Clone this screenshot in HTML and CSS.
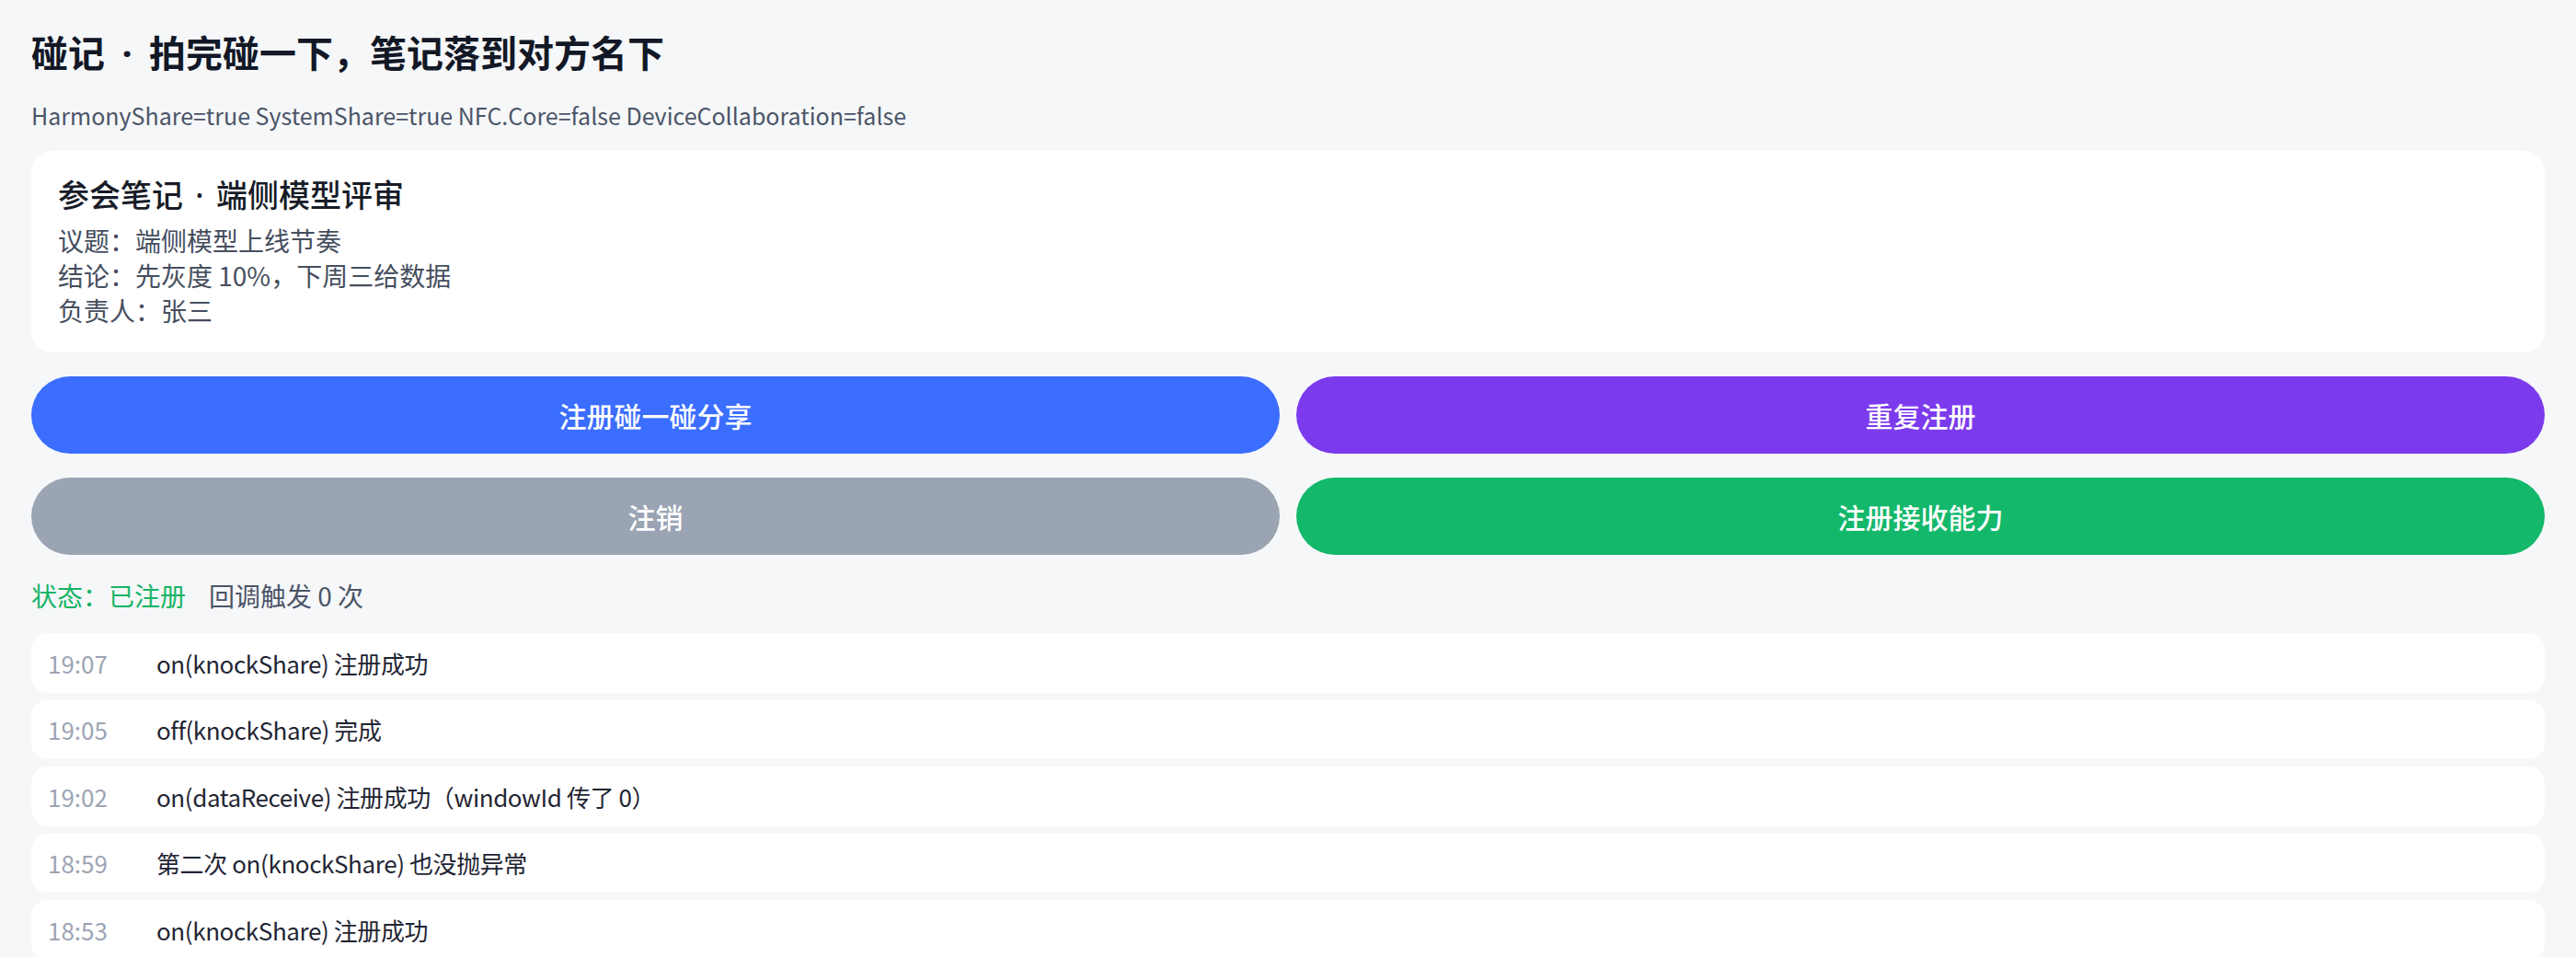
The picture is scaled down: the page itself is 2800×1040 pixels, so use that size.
FILE: index.html
```html
<!DOCTYPE html>
<html lang="zh-CN">
<head>
<meta charset="utf-8">
<title>碰记</title>
<link rel="stylesheet" href="styles.css">
</head>
<body>
<main class="page">
  <h1 class="title">碰记 · 拍完碰一下，笔记落到对方名下</h1>
  <p class="caps">HarmonyShare=true SystemShare=true NFC.Core=false DeviceCollaboration=false</p>

  <section class="note-card">
    <h2 class="note-title">参会笔记 · 端侧模型评审</h2>
    <p class="note-line">议题：端侧模型上线节奏</p>
    <p class="note-line">结论：先灰度 10%，下周三给数据</p>
    <p class="note-line">负责人：张三</p>
  </section>

  <div class="actions">
    <button class="btn btn-blue" type="button">注册碰一碰分享</button>
    <button class="btn btn-purple" type="button">重复注册</button>
    <button class="btn btn-gray" type="button">注销</button>
    <button class="btn btn-green" type="button">注册接收能力</button>
  </div>

  <div class="status">
    <span class="state">状态：已注册</span>
    <span class="count">回调触发 0 次</span>
  </div>

  <ul class="log">
    <li class="log-item"><span class="log-time">19:07</span><span class="log-msg">on(knockShare) 注册成功</span></li>
    <li class="log-item"><span class="log-time">19:05</span><span class="log-msg">off(knockShare) 完成</span></li>
    <li class="log-item"><span class="log-time">19:02</span><span class="log-msg">on(dataReceive) 注册成功（windowId 传了 0）</span></li>
    <li class="log-item"><span class="log-time">18:59</span><span class="log-msg">第二次 on(knockShare) 也没抛异常</span></li>
    <li class="log-item"><span class="log-time">18:53</span><span class="log-msg">on(knockShare) 注册成功</span></li>
  </ul>
</main>
</body>
</html>
```

FILE: styles.css
```css
* {
  box-sizing: border-box;
}

html,
body {
  margin: 0;
  padding: 0;
  background: #f6f7f9;
}

body {
  font-family: "Noto Sans CJK SC", "Noto Sans", sans-serif;
  color: #1f2533;
  overflow: hidden;
}

.page {
  padding: 32px 34px 0;
  display: flex;
  flex-direction: column;
}

/* Headings take the Latin face first so the middle dot stays narrow */
.title,
.note-title {
  font-family: "Noto Sans", "Noto Sans CJK SC", sans-serif;
}

.title {
  margin: 0;
  font-size: 40px;
  line-height: 52px;
  font-weight: 700;
  word-spacing: 8px;
  color: #121826;
}

.caps {
  margin: 23px 0 0;
  font-size: 25px;
  line-height: 36px;
  color: #4b5567;
}

.note-card {
  margin-top: 21px;
  background: #ffffff;
  border-radius: 22px;
  padding: 24px 29px 27px;
}

.note-title {
  margin: 0 0 6px;
  font-size: 34px;
  line-height: 48px;
  font-weight: 500;
  word-spacing: 4.5px;
  color: #171c28;
}

.note-line {
  margin: 0;
  font-size: 28px;
  line-height: 38px;
  color: #464e5e;
}

.actions {
  margin-top: 26px;
  display: grid;
  grid-template-columns: 1fr 1fr;
  column-gap: 18px;
  row-gap: 26px;
}

.btn {
  height: 84px;
  border: 0;
  border-radius: 42px;
  font-family: inherit;
  font-size: 30px;
  font-weight: 500;
  color: #ffffff;
  padding: 0;
}

.btn-blue {
  background: #3b6eff;
}

.btn-purple {
  background: #7c3aed;
}

.btn-gray {
  background: #9aa4b3;
}

.btn-green {
  background: #13b86a;
}

.status {
  margin-top: 24px;
  display: flex;
  gap: 25px;
  font-size: 28px;
  line-height: 40px;
}

.state {
  color: #17b466;
}

.count {
  color: #4b5567;
}

.log {
  list-style: none;
  margin: 21px 0 0;
  padding: 0;
  display: flex;
  flex-direction: column;
  gap: 8px;
}

.log-item {
  height: 64.5px;
  background: #ffffff;
  border-radius: 18px;
  padding: 0 18px;
  display: flex;
  align-items: center;
  font-size: 26px;
}

.log-time {
  width: 118px;
  flex: none;
  color: #9ca4b4;
}

.log-msg {
  color: #1f2533;
  letter-spacing: -0.4px;
}
```
